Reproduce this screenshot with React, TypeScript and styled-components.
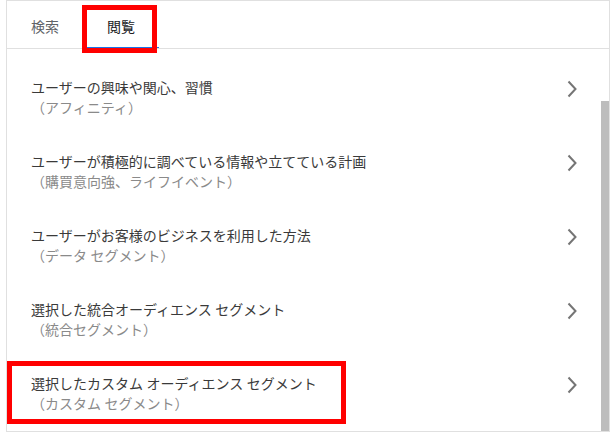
import React from "react";
import styled, { createGlobalStyle } from "styled-components";

const GlobalStyle = createGlobalStyle`
  body {
    margin: 0;
    background: #ffffff;
    font-family: Roboto, "Noto Sans CJK JP", sans-serif;
  }
`;

const Frame = styled.div`
  margin-left: 6px;
  width: 604px;
  height: 432px;
  border: 1px solid #e0e0e0;
  box-sizing: border-box;
  display: flex;
  flex-direction: column;
  background: #ffffff;
`;

const TabBar = styled.div`
  height: 48px;
  display: flex;
  border-bottom: 1px solid #e0e0e0;
  box-sizing: border-box;
`;

const Tab = styled.div<{ $active?: boolean }>`
  position: relative;
  display: flex;
  align-items: center;
  padding: 2px 24px 0;
  font-size: 14px;
  color: ${(p) => (p.$active ? "#202124" : "#5f6368")};
  box-shadow: ${(p) => (p.$active ? "inset 0 -1px 0 #1a73e8" : "none")};
  cursor: pointer;
`;

const Highlight = styled.span<{ $top: number; $left: number; $width: number; $height: number }>`
  position: absolute;
  top: ${(p) => p.$top}px;
  left: ${(p) => p.$left}px;
  width: ${(p) => p.$width}px;
  height: ${(p) => p.$height}px;
  border: 5px solid #ff0000;
  box-sizing: border-box;
  pointer-events: none;
`;

const Body = styled.div`
  flex: 1;
  display: flex;
  min-height: 0;
`;

const List = styled.div`
  flex: 1;
  padding-top: 12px;
`;

const Row = styled.div`
  position: relative;
  height: 74px;
  display: flex;
  align-items: flex-start;
  padding: 17px 17px 0 24px;
  box-sizing: border-box;
  cursor: pointer;
`;

const Texts = styled.div`
  flex: 1;
  display: flex;
  flex-direction: column;
`;

const Title = styled.div`
  font-size: 14px;
  line-height: 20px;
  color: #3a3a3a;
`;

const Sub = styled.div`
  font-size: 14px;
  line-height: 20px;
  color: #8a8a8a;
`;

const Chevron = styled.svg`
  width: 24px;
  height: 24px;
  margin-top: -1px;
  flex: none;
`;

const Track = styled.div`
  width: 8px;
  display: flex;
  flex-direction: column;
`;

const Thumb = styled.div`
  margin-top: 52px;
  flex: 1;
  background: #bdbdbd;
`;

const items = [
  { title: "ユーザーの興味や関心、習慣", sub: "（アフィニティ）" },
  { title: "ユーザーが積極的に調べている情報や立てている計画", sub: "（購買意向強、ライフイベント）" },
  { title: "ユーザーがお客様のビジネスを利用した方法", sub: "（データ セグメント）" },
  { title: "選択した統合オーディエンス セグメント", sub: "（統合セグメント）" },
  { title: "選択したカスタム オーディエンス セグメント", sub: "（カスタム セグメント）", marked: true },
];

const App = () => {
  return (
    <>
      <GlobalStyle />
      <Frame>
        <TabBar>
          <Tab>検索</Tab>
          <Tab $active>
            閲覧
            <Highlight $top={4} $left={-1} $width={75} $height={48} />
          </Tab>
        </TabBar>
        <Body>
          <List>
            {items.map((item) => (
              <Row key={item.title}>
                <Texts>
                  <Title>{item.title}</Title>
                  <Sub>{item.sub}</Sub>
                </Texts>
                <Chevron viewBox="0 0 24 24">
                  <path d="M8.5 4.5 L15.5 12 L8.5 19.5" fill="none" stroke="#757575" strokeWidth="2" />
                </Chevron>
                {item.marked && <Highlight $top={4} $left={0} $width={339} $height={63} />}
              </Row>
            ))}
          </List>
          <Track>
            <Thumb />
          </Track>
        </Body>
      </Frame>
    </>
  );
};

export default App;
